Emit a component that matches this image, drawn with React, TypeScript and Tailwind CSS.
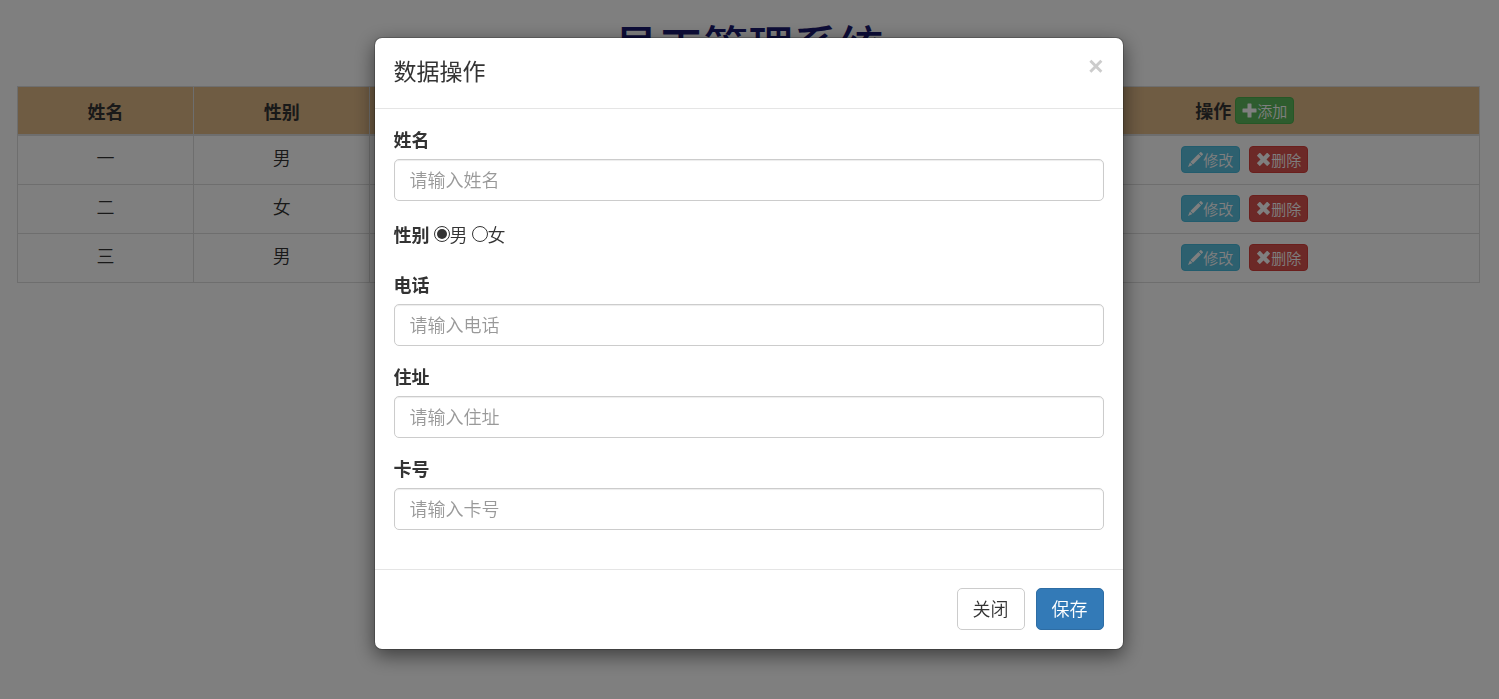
import type { ReactNode } from "react";

function PlusIcon() {
  return (
    <svg viewBox="0 0 15 15" className="size-[15px] shrink-0" fill="currentColor" aria-hidden="true">
      <path d="M6 .5h3q.5 0 .5.5v4.500h4.500q.5 0 .5.5v3q0 .5-.5.5H9.500V14q0 .5-.5.5H6q-.5 0-.5-.5V9.500H1q-.5 0-.5-.5V6q0-.5.5-.5h4.500V1q0-.5.5-.5z" />
    </svg>
  );
}

function PencilIcon() {
  return (
    <svg viewBox="0 0 15 15" className="size-[15px] shrink-0" fill="currentColor" aria-hidden="true">
      <path d="M12.300.2q.5-.4 1 0l1.500 1.500q.4.500 0 1l-1.200 1.300-2.600-2.600zM10.400 2l2.600 2.600-8 8-2.600-2.600zM1.900 10.600l2.500 2.500L0 15z" />
    </svg>
  );
}

function RemoveIcon() {
  return (
    <svg viewBox="0 0 15 15" className="size-[15px] shrink-0" fill="currentColor" aria-hidden="true">
      <path d="M3.400 1.100q.4-.4.800 0l3.300 3.300 3.300-3.300q.4-.4.800 0l2.200 2.200q.4.4 0 .8L10.500 7.400l3.300 3.300q.4.4 0 .8l-2.200 2.200q-.4.4-.8 0L7.500 10.400l-3.300 3.300q-.4.4-.8 0L1.200 11.500q-.4-.4 0-.8l3.300-3.300L1.200 4.100q-.4-.4 0-.8z" />
    </svg>
  );
}

const tones = {
  green: "bg-[#5cb85c] border-[#4cae4c]",
  blue: "bg-[#5bc0de] border-[#46b8da]",
  red: "bg-[#d9534f] border-[#d43f3a]",
};

function SmallButton({ tone, icon, children }: { tone: keyof typeof tones; icon: ReactNode; children: ReactNode }) {
  return (
    <button
      type="button"
      className={`inline-flex h-[27px] items-center rounded-sm border px-1.5 align-middle text-[15px] leading-6 font-[350] text-white ${tones[tone]}`}
    >
      {icon}
      {children}
    </button>
  );
}

function Field({ id, label }: { id: string; label: string }) {
  return (
    <div className="mb-[19px]">
      <label htmlFor={id} className="mb-2 block leading-[23px] font-bold">
        {label}
      </label>
      <input
        id={id}
        type="text"
        placeholder={`请输入${label}`}
        className="block h-[42px] w-full rounded-[5px] border border-[#ccc] px-[15px] pb-0.5 font-[350] shadow-[inset_0_1px_1px_rgba(0,0,0,0.075)] outline-none placeholder:text-[#999]"
      />
    </div>
  );
}

function Radio({ label, value, defaultChecked }: { label: string; value: string; defaultChecked?: boolean }) {
  return (
    <label className="flex items-center font-[350]">
      <input
        type="radio"
        name="gender"
        value={value}
        defaultChecked={defaultChecked}
        className="mb-0.5 size-4 appearance-none rounded-full border border-[#333] bg-white p-0.5 before:block before:size-full before:rounded-full checked:before:bg-[#333]"
      />
      {label}
    </label>
  );
}

const rows = [
  { name: "一", gender: "男" },
  { name: "二", gender: "女" },
  { name: "三", gender: "男" },
];

const cell = "h-[49px] border border-[#ddd] px-2.5 pt-[9px] pb-2.5 align-top";
const headCell = "border border-b-2 border-[#ddd] p-2.5 align-bottom font-bold";

export default function App() {
  return (
    <div className="min-h-screen bg-white font-['Noto_Sans_CJK_SC',sans-serif] text-[18px] leading-[25px] text-[#333]">
      <main className="px-[17px] pt-5 pr-[19px]">
        <h1 className="mb-4 text-center text-[45px] leading-[50px] font-medium text-[#191970]">员工管理系统</h1>
        <table className="w-full table-fixed border-collapse border border-[#ddd] text-center font-[350]">
          <colgroup>
            <col className="w-[12.05%]" />
            <col className="w-[12.05%]" />
            <col className="w-[14.6%]" />
            <col className="w-[14.6%]" />
            <col className="w-[14.6%]" />
            <col className="w-[32.1%]" />
          </colgroup>
          <thead className="bg-[#deb887]">
            <tr>
              <th className={headCell}>姓名</th>
              <th className={headCell}>性别</th>
              <th className={headCell}>电话</th>
              <th className={headCell}>住址</th>
              <th className={headCell}>卡号</th>
              <th className={headCell}>
                <div className="flex items-center justify-center gap-1 leading-[23px]">
                  操作
                  <SmallButton tone="green" icon={<PlusIcon />}>
                    添加
                  </SmallButton>
                </div>
              </th>
            </tr>
          </thead>
          <tbody>
            {rows.map((row) => (
              <tr key={row.name}>
                <td className={cell}>{row.name}</td>
                <td className={cell}>{row.gender}</td>
                <td className={cell} />
                <td className={cell} />
                <td className={cell} />
                <td className="h-[49px] border border-[#ddd] px-2.5 align-middle">
                  <div className="flex justify-center gap-[9px]">
                    <SmallButton tone="blue" icon={<PencilIcon />}>
                      修改
                    </SmallButton>
                    <SmallButton tone="red" icon={<RemoveIcon />}>
                      删除
                    </SmallButton>
                  </div>
                </td>
              </tr>
            ))}
          </tbody>
        </table>
      </main>

      <div className="fixed inset-0 overflow-y-auto bg-black/50 pt-[37px] pr-[18px] pb-4 pl-4">
        <div
          role="dialog"
          aria-modal="true"
          aria-labelledby="dialog-title"
          className="mx-auto max-w-[750px] rounded-lg border border-black/20 bg-white bg-clip-padding shadow-[0_6px_19px_rgba(0,0,0,0.5)]"
        >
          <header className="flex items-start justify-between border-b border-[#e5e5e5] px-[19px] pt-[19px] pb-6">
            <h4 id="dialog-title" className="text-[23px] leading-[27px] font-normal">
              数据操作
            </h4>
            <button
              type="button"
              aria-label="关闭窗口"
              className="font-['Liberation_Sans',sans-serif] text-[26px] leading-[18px] font-bold text-[#ccc]"
            >
              ×
            </button>
          </header>

          <form>
            <div className="px-[19px] pt-[19px] pb-5">
              <Field id="name" label="姓名" />
              <div role="radiogroup" aria-labelledby="gender-label" className="mb-6 flex h-[29px] items-center gap-1">
                <span id="gender-label" className="font-bold">
                  性别
                </span>
                <Radio label="男" value="male" defaultChecked />
                <Radio label="女" value="female" />
              </div>
              <Field id="phone" label="电话" />
              <Field id="address" label="住址" />
              <Field id="card" label="卡号" />
            </div>
            <footer className="flex justify-end gap-[11px] border-t border-[#e5e5e5] p-[19px] pt-[18px]">
              <button
                type="button"
                className="h-[42px] rounded-[5px] border border-[#ccc] bg-white px-[15px] pb-0.5 font-[350]"
              >
                关闭
              </button>
              <button
                type="button"
                className="h-[42px] rounded-[5px] border border-[#2e6da4] bg-[#337ab7] px-[15px] pb-0.5 font-[350] text-white"
              >
                保存
              </button>
            </footer>
          </form>
        </div>
      </div>
    </div>
  );
}
